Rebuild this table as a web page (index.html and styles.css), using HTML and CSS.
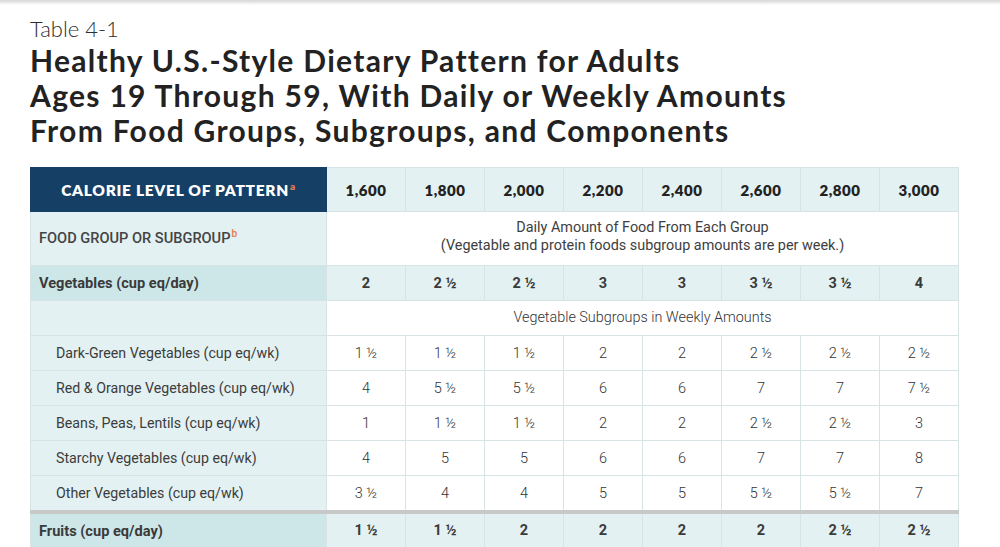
FILE: index.html
```html
<!DOCTYPE html>
<html lang="en">
<head>
<meta charset="utf-8">
<title>Table 4-1</title>
<link rel="stylesheet" href="styles.css">
</head>
<body>
<div class="topshade"></div>
<main class="page">
  <p class="kicker">Table 4-1</p>
  <h1 class="title">Healthy U.S.-Style Dietary Pattern for Adults<br>Ages 19 Through 59, With Daily or Weekly Amounts<br>From Food Groups, Subgroups, and Components</h1>
  <table class="pattern">
    <colgroup>
      <col class="c-label">
      <col class="c-num"><col class="c-num"><col class="c-num"><col class="c-num">
      <col class="c-num"><col class="c-num"><col class="c-num"><col class="c-num">
    </colgroup>
    <thead>
      <tr class="r-head">
        <th class="h-label">CALORIE LEVEL OF PATTERN<sup class="fn">a</sup></th>
        <th>1,600</th><th>1,800</th><th>2,000</th><th>2,200</th><th>2,400</th><th>2,600</th><th>2,800</th><th>3,000</th>
      </tr>
    </thead>
    <tbody>
      <tr class="r-group">
        <th class="l-group">FOOD GROUP OR SUBGROUP<sup class="fn">b</sup></th>
        <td colspan="8" class="note">Daily Amount of Food From Each Group<br>(Vegetable and protein foods subgroup amounts are per week.)</td>
      </tr>
      <tr class="r-main">
        <th>Vegetables (cup eq/day)</th>
        <td>2</td><td>2 ½</td><td>2 ½</td><td>3</td><td>3</td><td>3 ½</td><td>3 ½</td><td>4</td>
      </tr>
      <tr class="r-sub">
        <th></th>
        <td colspan="8" class="note">Vegetable Subgroups in Weekly Amounts</td>
      </tr>
      <tr class="r-sub">
        <th>Dark-Green Vegetables (cup eq/wk)</th>
        <td>1 ½</td><td>1 ½</td><td>1 ½</td><td>2</td><td>2</td><td>2 ½</td><td>2 ½</td><td>2 ½</td>
      </tr>
      <tr class="r-sub">
        <th>Red &amp; Orange Vegetables (cup eq/wk)</th>
        <td>4</td><td>5 ½</td><td>5 ½</td><td>6</td><td>6</td><td>7</td><td>7</td><td>7 ½</td>
      </tr>
      <tr class="r-sub">
        <th>Beans, Peas, Lentils (cup eq/wk)</th>
        <td>1</td><td>1 ½</td><td>1 ½</td><td>2</td><td>2</td><td>2 ½</td><td>2 ½</td><td>3</td>
      </tr>
      <tr class="r-sub">
        <th>Starchy Vegetables (cup eq/wk)</th>
        <td>4</td><td>5</td><td>5</td><td>6</td><td>6</td><td>7</td><td>7</td><td>8</td>
      </tr>
      <tr class="r-sub r-last">
        <th>Other Vegetables (cup eq/wk)</th>
        <td>3 ½</td><td>4</td><td>4</td><td>5</td><td>5</td><td>5 ½</td><td>5 ½</td><td>7</td>
      </tr>
      <tr class="r-main r-break">
        <th>Fruits (cup eq/day)</th>
        <td>1 ½</td><td>1 ½</td><td>2</td><td>2</td><td>2</td><td>2</td><td>2 ½</td><td>2 ½</td>
      </tr>
    </tbody>
  </table>
</main>
</body>
</html>
```

FILE: styles.css
```css
html, body {
  margin: 0;
  padding: 0;
  background: #ffffff;
}

body {
  font-family: Roboto, "Liberation Sans", sans-serif;
  color: #3a3a3a;
  overflow: hidden;
}

.topshade {
  height: 5px;
  background: linear-gradient(to bottom, #d6d6d6, #ffffff);
}

.page {
  padding: 0 0 0 30px;
}

.kicker {
  margin: 11px 0 0 0;
  font-family: Lato, "Open Sans", sans-serif;
  font-weight: 300;
  font-size: 22px;
  line-height: 26px;
  color: #2d2d2d;
}

.title {
  margin: 1px 0 0 0;
  font-family: Lato, "Open Sans", sans-serif;
  font-weight: 700;
  font-size: 30px;
  line-height: 35px;
  color: #222222;
  letter-spacing: 1.3px;
}

.pattern {
  margin-top: 19px;
  border-collapse: collapse;
  table-layout: fixed;
  width: 928px;
  font-size: 14.5px;
}

.c-label { width: 296px; }
.c-num { width: 79px; }

.pattern th,
.pattern td {
  border: 1px solid #d7e3e5;
  padding: 0;
  text-align: center;
  font-weight: 400;
  color: #3e3e3e;
}

.pattern tbody th {
  text-align: left;
  padding-left: 8px;
  background: #e3f1f2;
}

.r-head th {
  height: 43px;
  background: #e3f1f2;
  font-family: Lato, "Open Sans", sans-serif;
  font-weight: 800;
  font-size: 15px;
  color: #222222;
  letter-spacing: 0.5px;
}

.r-head th.h-label {
  background: #163f66;
  color: #ffffff;
  font-size: 15.5px;
  letter-spacing: 0.7px;
  border-color: #163f66;
}

.fn {
  color: #e8784a;
  font-size: 10px;
  vertical-align: 6px;
  line-height: 0;
  margin-left: 1px;
}

.r-group th.l-group {
  height: 51px;
  font-weight: 500;
  font-size: 14.6px;
  color: #444444;
  vertical-align: middle;
  padding-bottom: 2px;
}

.note {
  background: #ffffff;
  line-height: 18px;
  color: #4a4a4a;
  font-weight: 300;
  font-size: 14.4px;
}

.r-group .note {
  padding-bottom: 4px;
}

.r-main th,
.r-main td {
  height: 34px;
  font-weight: 700;
  color: #3a3a3a;
}

.pattern .r-main th {
  background: #cde6e8;
  font-weight: 700;
  font-size: 14.6px;
}

.r-main td {
  background: #e3f1f2;
}

.r-sub th,
.r-sub td {
  height: 34px;
}

.pattern .r-sub th {
  padding-left: 25px;
  font-weight: 400;
  font-size: 14.2px;
  color: #3c3c3c;
}

.r-sub td {
  background: #ffffff;
  font-weight: 300;
  color: #333333;
}

.r-break th,
.r-break td {
  height: 33px;
  border-top: 4px solid #c7c9c9;
}
```
